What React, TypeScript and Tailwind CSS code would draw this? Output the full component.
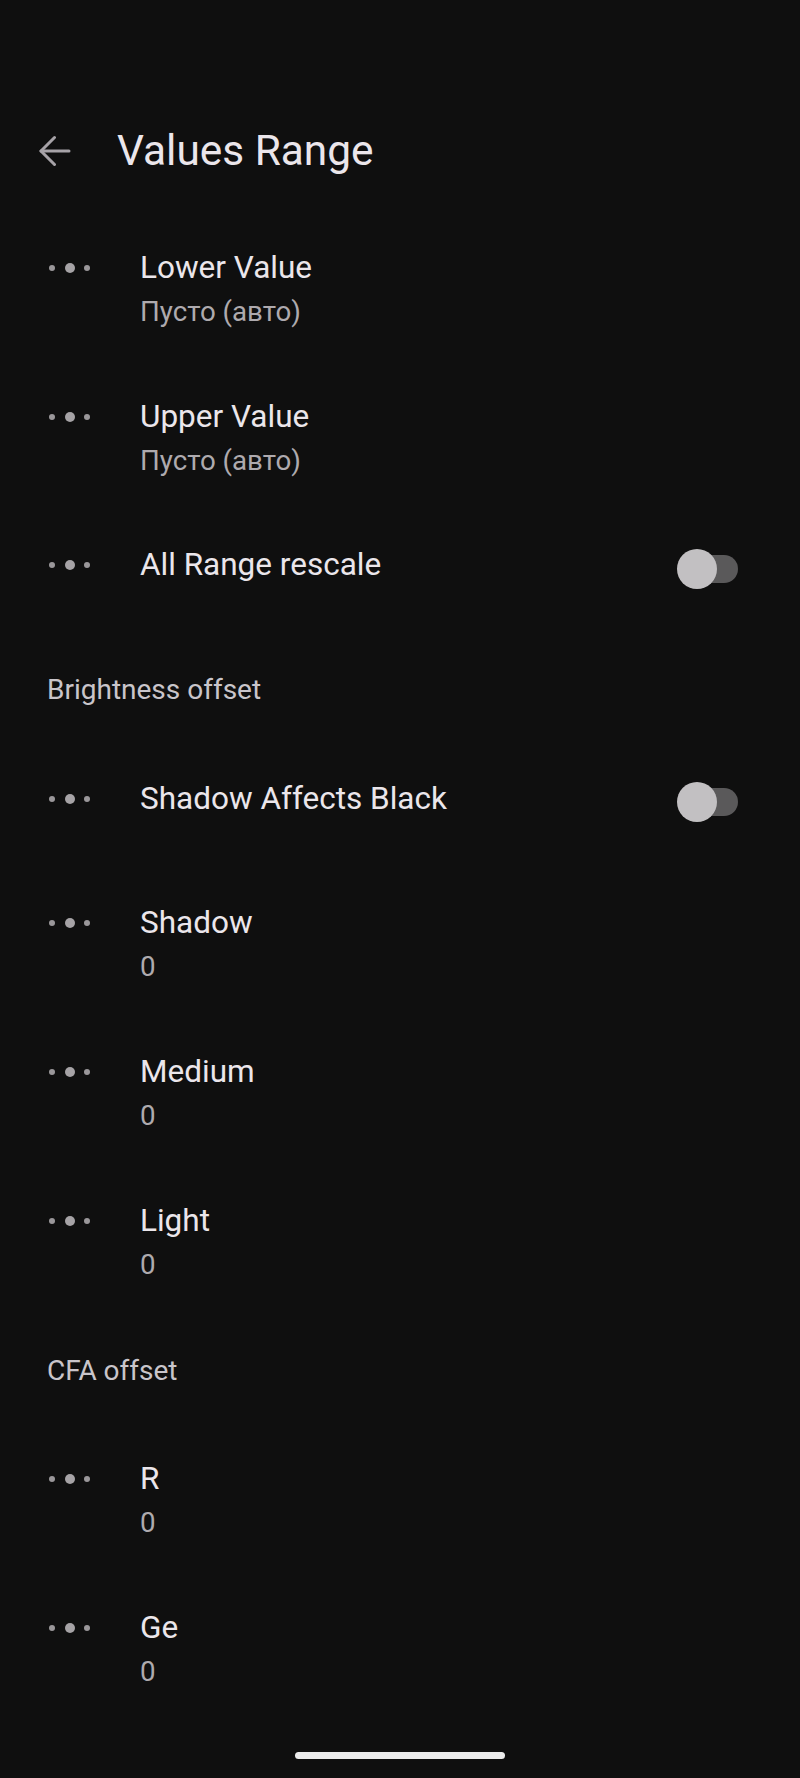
import React from "react";

const font = { fontFamily: "Roboto, 'Noto Sans', sans-serif" };

function Dots() {
  return (
    <div className="flex h-[44px] w-[140px] shrink-0 items-center pl-[49px]">
      <span className="h-[6px] w-[6px] rounded-full bg-[#9a979a]" />
      <span className="ml-[10px] h-[10px] w-[10px] rounded-full bg-[#a6a3a6]" />
      <span className="ml-[9px] h-[6px] w-[6px] rounded-full bg-[#9a979a]" />
    </div>
  );
}

function Toggle({ mt }: { mt: string }) {
  return (
    <div className={`relative ml-auto mr-[62px] h-[40px] w-[61px] ${mt}`}>
      <div className="absolute left-[5px] top-[6px] h-[28px] w-[56px] rounded-full bg-[#5a595a]" />
      <div className="absolute left-0 top-0 h-[40px] w-[40px] rounded-full bg-[#c2c0c2]" />
    </div>
  );
}

function Item({ title, sub, h }: { title: string; sub: string; h: string }) {
  return (
    <div className={`flex items-start ${h}`}>
      <Dots />
      <div className="flex flex-col">
        <div className="text-[31.5px] leading-[44px] text-[#ebe6eb]">{title}</div>
        <div className="text-[27.7px] leading-[44px] text-[#aeaaae]">{sub}</div>
      </div>
    </div>
  );
}

function SwitchItem({ title, h, mt }: { title: string; h: string; mt: string }) {
  return (
    <div className={`flex items-start ${h}`}>
      <Dots />
      <div className="text-[31.5px] leading-[44px] text-[#ebe6eb]">{title}</div>
      <Toggle mt={mt} />
    </div>
  );
}

function Header({ text, h }: { text: string; h: string }) {
  return (
    <div className={`pl-[47px] ${h}`}>
      <div className="text-[28px] leading-[32px] text-[#c9c5ca]">{text}</div>
    </div>
  );
}

export default function App() {
  return (
    <div className="relative h-[1778px] w-[800px] overflow-hidden bg-[#0f0f0f]" style={font}>
      <div className="flex h-[246px] items-start pt-[123px]">
        <div className="flex h-[56px] items-center pl-[39px]">
          <svg width="32" height="32" viewBox="0 0 32 32" fill="none" stroke="#a6a2a7" strokeWidth="3" strokeLinecap="round" strokeLinejoin="round">
            <path d="M2 16 H30" />
            <path d="M15.5 2.5 L2 16 L15.5 29.5" />
          </svg>
          <div className="ml-[46px] text-[42.4px] leading-[56px] text-[#ebe6eb]">Values Range</div>
        </div>
      </div>

      <Item title="Lower Value" sub="Пусто (авто)" h="h-[149px]" />
      <Item title="Upper Value" sub="Пусто (авто)" h="h-[148px]" />
      <SwitchItem title="All Range rescale" h="h-[131px]" mt="mt-[6px]" />
      <Header text="Brightness offset" h="h-[103px]" />
      <SwitchItem title="Shadow Affects Black" h="h-[124px]" mt="mt-[5px]" />
      <Item title="Shadow" sub="0" h="h-[149px]" />
      <Item title="Medium" sub="0" h="h-[149px]" />
      <Item title="Light" sub="0" h="h-[156px]" />
      <Header text="CFA offset" h="h-[102px]" />
      <Item title="R" sub="0" h="h-[149px]" />
      <Item title="Ge" sub="0" h="h-[149px]" />

      <div className="absolute bottom-[19px] left-[295px] h-[7px] w-[210px] rounded-full bg-[#ececec]" />
    </div>
  );
}
